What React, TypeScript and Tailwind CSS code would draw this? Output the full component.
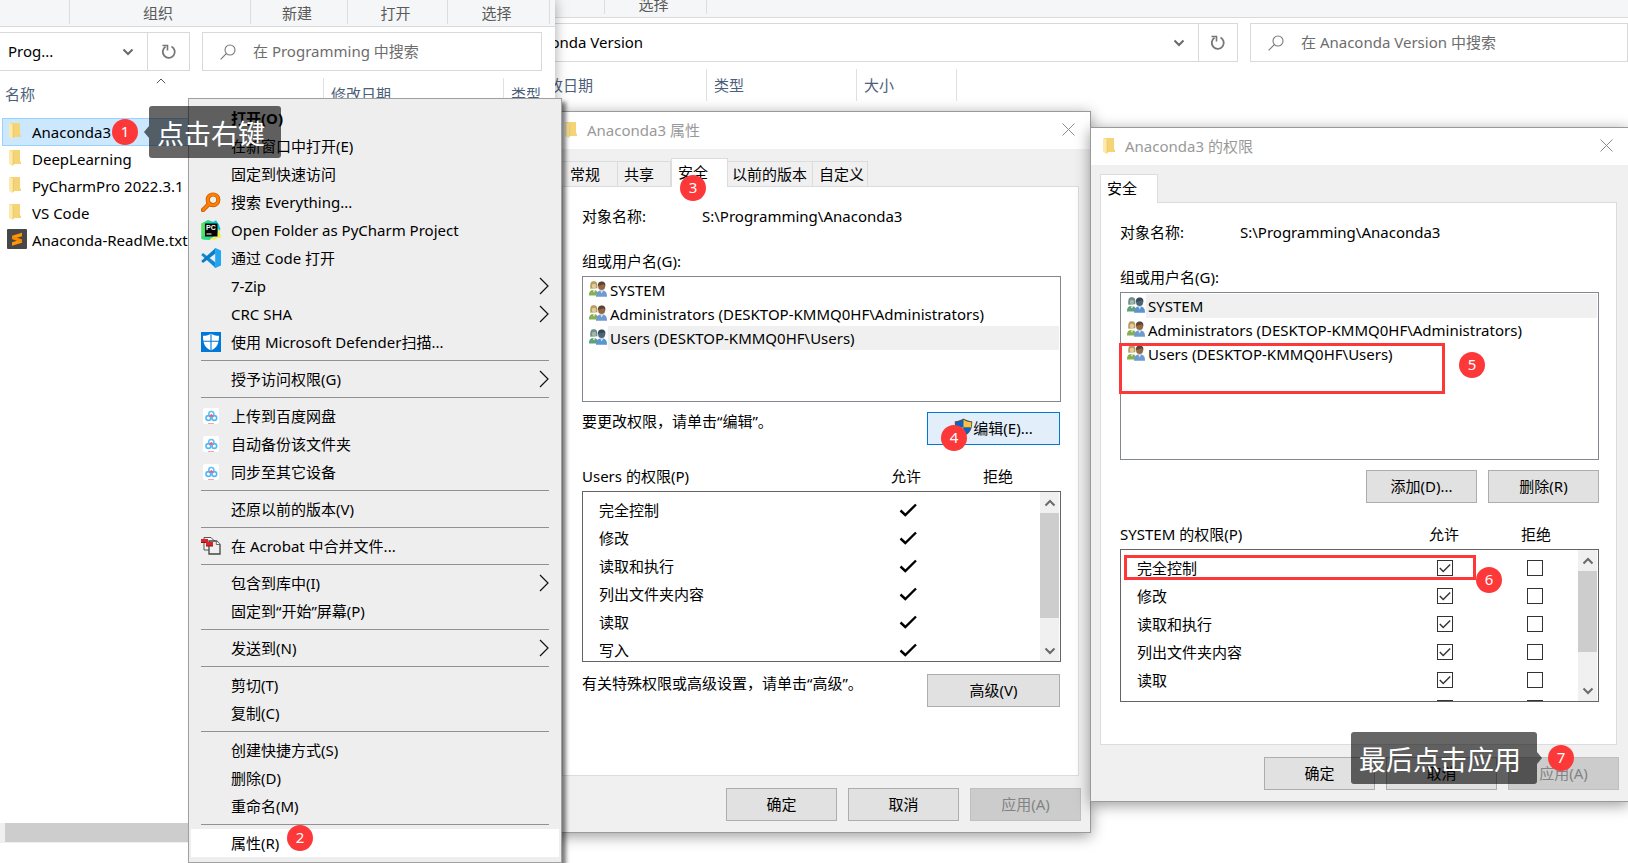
import { useState, type ReactNode } from "react";

const FONT = "font-['Noto_Sans','Noto_Sans_CJK_SC',sans-serif]";

/* ---------- icons ---------- */

function FolderIcon() {
  return (
    <svg width="14" height="18" viewBox="0 0 14 18" aria-hidden="true">
      <path d="M2 1h9.500v11L13 13v2H4z" fill="#f6d57b" />
      <path d="M5.500 1H12v11.500l1 .8V15H4.500z" fill="#f5d477" />
      <path d="M1 1l4.200 1.800V17.500L1 15z" fill="#fce9ac" />
      <path d="M5.200 3v13" stroke="#eac763" strokeWidth="1" />
    </svg>
  );
}

function SublimeIcon() {
  return (
    <svg width="20" height="20" viewBox="0 0 20 20" aria-hidden="true">
      <rect width="20" height="20" rx="1" fill="#474747" />
      <path d="M5 6.800l10-3v3.400L9.800 8.700l5.200 1.700v3.300l-10 3v-3.400l5-1.500-5-1.700z" fill="#ff9800" />
      <path d="M5 6.800v3.300l10 3.500v-3.200L8.500 8z" fill="#f57c00" opacity=".55" />
    </svg>
  );
}

function EverythingIcon() {
  return (
    <svg width="20" height="20" viewBox="0 0 20 20" aria-hidden="true">
      <path d="M2 18l6.500-6.500" stroke="#c45500" strokeWidth="4.400" strokeLinecap="round" />
      <circle cx="12" cy="7.800" r="5.300" fill="none" stroke="#c45500" strokeWidth="4.200" />
      <path d="M2 18l6.500-6.500" stroke="#ff8000" strokeWidth="2.600" strokeLinecap="round" />
      <circle cx="12" cy="7.800" r="5.300" fill="none" stroke="#ff8000" strokeWidth="2.800" />
    </svg>
  );
}

function PyCharmIcon() {
  return (
    <svg width="20" height="20" viewBox="0 0 20 20" aria-hidden="true">
      <path d="M.5 3.500L7 0l5 2 3-1.500L18 5l-2 9-8 6-7.500-1z" fill="#21d789" />
      <path d="M9 1l3 1 3-1.500L18 5l1.500 4-3 4L11 3z" fill="#0fc5dd" />
      <path d="M.5 3.500l3-1.500v17l-3-.8z" fill="#5be25a" />
      <path d="M16.500 8l2 3 1.500 7-3-.5-3 2H5l12-3z" fill="#eef23a" />
      <path d="M.5 16.500l4-1.500 7 1.500-3 3.500-7.500-.8z" fill="#2fdc86" />
      <rect x="4" y="3.500" width="12.500" height="13" fill="#050505" />
      <rect x="5.500" y="13.500" width="5" height="1" fill="#fff" />
      <text x="5" y="10.200" fontSize="7" fontWeight="700" fill="#fff" fontFamily="Liberation Sans, sans-serif">PC</text>
    </svg>
  );
}

function VsCodeIcon() {
  return (
    <svg width="20" height="20" viewBox="0 0 20 20" aria-hidden="true">
      <path d="M.2 7L2 5l12.500 9.500v5L13.500 19z" fill="#0f8ad6" />
      <path d="M.2 13L2 15l12.500-9.500v-5L13.500 1z" fill="#0b7cc6" />
      <path d="M14.500 0L20 2.500v15L14.500 20l-1.500-1 1.200-1V2L13 1z" fill="#24a5f2" />
    </svg>
  );
}

function DefenderIcon() {
  return (
    <svg width="20" height="20" viewBox="0 0 20 20" aria-hidden="true">
      <rect width="20" height="20" fill="#0078d7" />
      <path d="M10 1.500c2 1.500 4.500 2.300 8 2.300 0 7-1.500 12-8 14.700C3.500 15.800 2 10.800 2 3.800c3.500 0 6-.8 8-2.300z" fill="#fff" />
      <path d="M10 1v18M2 9.300h16" stroke="#0078d7" strokeWidth="1.100" />
    </svg>
  );
}

function BaiduIcon() {
  return (
    <svg width="20" height="20" viewBox="0 0 20 20" aria-hidden="true">
      <rect x="2" y="2" width="16" height="16" rx="2" fill="#fff" />
      <circle cx="10.300" cy="8" r="2.600" fill="none" stroke="#5cc0f7" strokeWidth="1.500" />
      <circle cx="7.400" cy="12" r="2.400" fill="none" stroke="#4fbaf8" strokeWidth="1.600" />
      <circle cx="13.300" cy="12" r="2.400" fill="none" stroke="#4fbaf8" strokeWidth="1.600" />
      <path d="M8.300 10.800l2-1.900 2 1.900" fill="none" stroke="#ee6478" strokeWidth="1.600" />
      <path d="M7 17.500h6" stroke="#f7a5b0" strokeWidth="1" />
    </svg>
  );
}

function AcrobatIcon() {
  return (
    <svg width="20" height="20" viewBox="0 0 20 20" aria-hidden="true">
      <path d="M3 1.500h7l3 3V14H3z" fill="#f4f4f4" stroke="#555" />
      <path d="M8 5h7.500L19 8.500V18H8z" fill="#efefef" stroke="#444" strokeWidth="1.300" />
      <path d="M15.300 5v3.500H19" fill="#fff" stroke="#666" />
      <path d="M0 3h7v3h5v4H5V7H0z" fill="#d9222a" />
      <path d="M0 6.500h5M5 10h7" stroke="#8f1418" />
    </svg>
  );
}

function UsersIcon({ dim = false }: { dim?: boolean }) {
  return (
    <svg width="18" height="16" viewBox="0 0 18 16" aria-hidden="true">
      <path d="M0 14.500c0-4 1.500-5.500 4.500-5.500S9 10.500 9 14.500z" fill={dim ? "#5da079" : "#84b052"} />
      <path d="M1.300 7.800C.8 2 2 .3 4.800.3S8.800 2 8.300 7.300z" fill={dim ? "#6f8f86" : "#b89d60"} />
      <circle cx="5" cy="5" r="2.200" fill={dim ? "#a4b5b0" : "#e6cb9f"} />
      <path d="M3.500 9.500L5 11.500 6.500 9z" fill="#e9f0e2" />
      <path d="M7 15.800c0-4.600 2-6.300 5.700-6.300s5.300 1.700 5.300 6.300z" fill={dim ? "#5b95cf" : "#6f9bd1"} />
      <path d="M11.400 9.800l1.300 2.600 1.400-2.600z" fill="#dce9f7" />
      <circle cx="12.600" cy="5.400" r="3.500" fill={dim ? "#4d6474" : "#966743"} />
      <path d="M8.900 5C8.900 1.500 10.300.6 12.800.6s4 1.400 3.500 4.900l-1.500-2.200z" fill={dim ? "#34495a" : "#5b4436"} />
    </svg>
  );
}

function ShieldIcon() {
  return (
    <svg width="19" height="19" viewBox="0 0 19 19" aria-hidden="true">
      <path d="M9.500.5c2.500 1.600 5 2.500 8.700 2.700C18.500 11 16 15.500 9.500 18.500 3 15.500.5 11 .8 3.200 4.500 3 7 2.100 9.500.5z" fill="#555" />
      <path d="M9.500 1.800V9.500H2C1.700 7.500 1.700 6 1.800 4.200 5 4 7.300 3.200 9.500 1.800z" fill="#0a64c8" />
      <path d="M9.500 1.800V9.500H17c.3-2 .3-3.500.2-5.300C14 4 11.700 3.200 9.500 1.800z" fill="#fdc23a" />
      <path d="M9.500 9.500H2.100c1 3.800 3.400 6.200 7.400 8z" fill="#fdc23a" />
      <path d="M9.500 9.500h7.400c-1 3.800-3.400 6.200-7.400 8z" fill="#0a64c8" />
    </svg>
  );
}

function Chevron({ up = false }: { up?: boolean }) {
  return (
    <svg width="12" height="8" viewBox="0 0 12 8" aria-hidden="true">
      <path d={up ? "M1.500 6.500L6 2l4.500 4.500" : "M1.500 1.500L6 6l4.500-4.500"} fill="none" stroke="#6a6a6a" strokeWidth="2" />
    </svg>
  );
}

function RefreshIcon() {
  return (
    <svg width="16" height="16" viewBox="0 0 16 16" aria-hidden="true">
      <path d="M10.500 2.500A6 6 0 1 1 4.500 2.800" fill="none" stroke="#767676" strokeWidth="1.800" />
      <path d="M1.500 1.500H6.500V6.500" fill="none" stroke="#767676" strokeWidth="1.600" />
    </svg>
  );
}

function SearchIcon() {
  return (
    <svg className="shrink-0" width="16" height="16" viewBox="0 0 16 16" aria-hidden="true">
      <circle cx="10" cy="6" r="5" fill="none" stroke="#7a7a7a" strokeWidth="1.100" />
      <path d="M6.300 9.700L.6 15.400" stroke="#7a7a7a" strokeWidth="1.200" />
    </svg>
  );
}

function CloseIcon() {
  return (
    <svg width="13" height="13" viewBox="0 0 13 13" aria-hidden="true">
      <path d="M.5.5l12 12M12.500.5l-12 12" stroke="#8c8c8c" strokeWidth="1" />
    </svg>
  );
}

/* ---------- explorer ---------- */

function RibbonGroup({ label, className }: { label?: string; className: string }) {
  return (
    <div className={`flex shrink-0 items-center justify-center border-r border-[#dcdddf] pr-1 text-[#5a5a5a] ${className}`}>
      {label}
    </div>
  );
}

function AddressButtons({ refreshWidth }: { refreshWidth: string }) {
  return (
    <>
      <button aria-label="以前的位置" className="flex w-[38px] items-center justify-center">
        <Chevron />
      </button>
      <button aria-label="刷新" className={`flex shrink-0 items-center justify-center border-l border-[#d9d9d9] ${refreshWidth}`}>
        <RefreshIcon />
      </button>
    </>
  );
}

function SearchBox({ placeholder, className }: { placeholder: string; className: string }) {
  return (
    <label className={`flex h-[39px] items-center gap-[17px] border border-[#d9d9d9] bg-white pl-[17px] ${className}`}>
      <SearchIcon />
      <input
        type="search"
        aria-label={placeholder}
        placeholder={placeholder}
        className="w-full min-w-0 bg-transparent pb-[2px] outline-none placeholder:text-[#6d6d6d]"
      />
    </label>
  );
}

function BackExplorer() {
  return (
    <section className="absolute inset-0 bg-white" aria-label="Anaconda Version">
      <div className="flex h-[18px] items-start border-b border-[#d9dadb] bg-[#f5f6f7]">
        <RibbonGroup className="h-[14px] w-[605px]" />
        <RibbonGroup label="选择" className="-mt-2 h-[22px] w-[102px] pt-[2px]" />
      </div>
      <div className="mt-[5px] flex pl-[508px]">
        <div className="flex h-[39px] w-[730px] border border-[#d9d9d9]">
          <input aria-label="地址" readOnly value="Anaconda Version" className="min-w-0 flex-1 pb-[2px] pl-[7px] outline-none" />
          <AddressButtons refreshWidth="w-[39px]" />
        </div>
        <SearchBox placeholder="在 Anaconda Version 中搜索" className="ml-3 flex-1" />
      </div>
      <div className="mt-[7px] flex h-8 items-center pl-[526px] text-[#4c607a]">
        <div className="flex h-full w-[181px] items-center border-r border-[#e0e0e0] pl-[7px]">修改日期</div>
        <div className="flex h-full w-[150px] items-center border-r border-[#e0e0e0] pl-[7px]">类型</div>
        <div className="flex h-full w-[100px] items-center border-r border-[#e0e0e0] pl-[7px]">大小</div>
      </div>
    </section>
  );
}

const FILES = ["Anaconda3", "DeepLearning", "PyCharmPro 2022.3.1", "VS Code", "Anaconda-ReadMe.txt"];

function FrontExplorer() {
  return (
    <section
      aria-label="Programming"
      className="absolute inset-y-0 left-0 flex w-[555px] flex-col bg-white shadow-[0_0_12px_rgba(0,0,0,0.35)]"
    >
      <div className="flex h-[27px] items-start border-b border-[#d9dadb] bg-[#f5f6f7]">
        <RibbonGroup className="h-6 w-[70px]" />
        <RibbonGroup label="组织" className="h-6 w-[181px] pt-[2px]" />
        <RibbonGroup label="新建" className="h-6 w-[97px] pt-[2px]" />
        <RibbonGroup label="打开" className="h-6 w-[100px] pt-[2px]" />
        <RibbonGroup label="选择" className="h-6 w-[102px] pt-[2px]" />
      </div>
      <div className="mt-[5px] flex pr-[13px]">
        <div className="flex h-[39px] w-[190px] border border-l-0 border-[#d9d9d9]">
          <input aria-label="地址" readOnly value="Prog..." className="min-w-0 flex-1 pb-[2px] pl-2 outline-none" />
          <AddressButtons refreshWidth="w-[42px]" />
        </div>
        <SearchBox placeholder="在 Programming 中搜索" className="ml-3 flex-1" />
      </div>
      <div className="relative mt-[7px] flex h-8 text-[#4c607a]">
        <div className="flex w-[324px] items-center border-r border-[#e0e0e0] pl-[5px]">名称</div>
        <div className="flex w-[180px] items-center border-r border-[#e0e0e0] pl-[7px]">修改日期</div>
        <div className="flex items-center pl-[7px]">类型</div>
        <svg className="absolute top-0 left-[156px]" width="10" height="6" viewBox="0 0 10 6" aria-hidden="true">
          <path d="M.8 5.200L5 1l4.200 4.200" fill="none" stroke="#555" />
        </svg>
      </div>
      <ul className="mt-2 pl-[2px]">
        {FILES.map((name, i) => (
          <li
            key={name}
            className={
              i === 0
                ? "-mb-px flex h-[28px] items-center border border-[#99d1ff] bg-[#cce8ff] whitespace-nowrap"
                : "flex h-[27px] items-center border-x border-transparent whitespace-nowrap"
            }
          >
            <span className={`flex w-[29px] items-center pb-[2px] ${i === 4 ? "pl-1" : "pl-[5px]"}`}>
              {i === 4 ? <SublimeIcon /> : <FolderIcon />}
            </span>
            {name}
          </li>
        ))}
      </ul>
      <div className="mt-auto mb-5 h-5 bg-[#f0f0f0] pl-[5px]">
        <div className="h-[19px] bg-[#cdcdcd]" />
      </div>
    </section>
  );
}

/* ---------- context menu ---------- */

type Item = { label: string; icon?: ReactNode; arrow?: boolean; bold?: boolean; active?: boolean };

const MENU: Item[][] = [
  [
    { label: "打开(O)", bold: true },
    { label: "在新窗口中打开(E)" },
    { label: "固定到快速访问" },
    { label: "搜索 Everything...", icon: <EverythingIcon /> },
    { label: "Open Folder as PyCharm Project", icon: <PyCharmIcon /> },
    { label: "通过 Code 打开", icon: <VsCodeIcon /> },
    { label: "7-Zip", arrow: true },
    { label: "CRC SHA", arrow: true },
    { label: "使用 Microsoft Defender扫描...", icon: <DefenderIcon /> },
  ],
  [{ label: "授予访问权限(G)", arrow: true }],
  [
    { label: "上传到百度网盘", icon: <BaiduIcon /> },
    { label: "自动备份该文件夹", icon: <BaiduIcon /> },
    { label: "同步至其它设备", icon: <BaiduIcon /> },
  ],
  [{ label: "还原以前的版本(V)" }],
  [{ label: "在 Acrobat 中合并文件...", icon: <AcrobatIcon /> }],
  [{ label: "包含到库中(I)", arrow: true }, { label: "固定到“开始”屏幕(P)" }],
  [{ label: "发送到(N)", arrow: true }],
  [{ label: "剪切(T)" }, { label: "复制(C)" }],
  [{ label: "创建快捷方式(S)" }, { label: "删除(D)" }, { label: "重命名(M)" }],
  [{ label: "属性(R)", active: true }],
];

function ContextMenu() {
  return (
    <div
      role="menu"
      className="absolute top-[98px] left-[188px] w-[374px] border border-[#a0a0a0] bg-[#eeeeee] px-[2px] py-[5px] shadow-[4px_4px_4px_rgba(0,0,0,0.5)]"
    >
      {MENU.map((group, g) => (
        <div key={g} role="group">
          {g > 0 && <div role="separator" className="mx-[10px] my-1 h-px bg-[#919191]" />}
          {group.map((item) => (
            <button
              key={item.label}
              role="menuitem"
              className={`flex h-7 w-full items-center pr-[10px] pl-[10px] text-left ${item.active ? "bg-white" : ""} ${item.bold ? "font-bold" : ""}`}
            >
              <span className="w-[30px] shrink-0">{item.icon}</span>
              <span className="flex-1">{item.label}</span>
              {item.arrow && (
                <svg width="10" height="18" viewBox="0 0 10 18" aria-hidden="true">
                  <path d="M1 1l8 8-8 8" fill="none" stroke="#111" strokeWidth="1.200" />
                </svg>
              )}
            </button>
          ))}
        </div>
      ))}
    </div>
  );
}

/* ---------- dialogs ---------- */

function PushButton({ children, className = "w-[111px]", disabled = false, focused = false }: {
  children: ReactNode;
  className?: string;
  disabled?: boolean;
  focused?: boolean;
}) {
  const tone = disabled
    ? "border-[#bfbfbf] bg-[#cccccc] text-[#838383]"
    : focused
      ? "border-[#0078d7] bg-[#e2effa]"
      : "border-[#adadad] bg-[#e1e1e1]";
  return (
    <button disabled={disabled} className={`flex h-[33px] shrink-0 items-center justify-center border pb-[2px] ${tone} ${className}`}>
      {children}
    </button>
  );
}

function Dialog({ title, tabs, selected, className, children }: {
  title: string;
  tabs: { label: string; box: string }[];
  selected: number;
  className: string;
  children: ReactNode;
}) {
  return (
    <section
      role="dialog"
      aria-label={title}
      className={`absolute w-[539px] border border-[#9a9a9a] bg-[#f0f0f0] shadow-[0_3px_14px_rgba(0,0,0,0.4)] ${className}`}
    >
      <header className="flex h-[37px] items-center bg-white pr-[15px] pb-[2px] pl-[11px] text-[#999]">
        <FolderIcon />
        <h2 className="ml-[9px] flex-1">{title}</h2>
        <button aria-label="关闭">
          <CloseIcon />
        </button>
      </header>
      <div role="tablist" className="flex h-[37px] items-end pl-[9px]">
        {tabs.map((tab, i) => (
          <button
            key={tab.label}
            role="tab"
            aria-selected={i === selected}
            className={`text-left whitespace-nowrap ${tab.box} ${
              i === selected
                ? "relative -mb-px h-[29px] border border-b-0 border-[#dcdcdc] bg-white pb-[2px]"
                : "h-[25px] border-t border-r border-[#dcdcdc] bg-[#f0f0f0]"
            }`}
          >
            {tab.label}
          </button>
        ))}
      </div>
      <div className="mr-[11px] ml-[9px] border border-[#dcdcdc] bg-white pr-[17px] pl-[19px]">{children}</div>
      <footer className="flex justify-end gap-[11px] pt-3 pr-[9px] pb-[11px]">
        <PushButton>确定</PushButton>
        <PushButton>取消</PushButton>
        <PushButton disabled>应用(A)</PushButton>
      </footer>
    </section>
  );
}

const PRINCIPALS = [
  "SYSTEM",
  "Administrators (DESKTOP-KMMQ0HF\\Administrators)",
  "Users (DESKTOP-KMMQ0HF\\Users)",
];

function ObjectAndUsers({ active, listHeight }: { active: number; listHeight: string }) {
  return (
    <>
      <div className="flex pt-[17px] leading-6">
        <span className="w-[120px]">对象名称:</span>
        <span>S:\Programming\Anaconda3</span>
      </div>
      <h3 className="mt-[21px] leading-6">组或用户名(G):</h3>
      <ul className={`mt-[3px] border border-[#828790] py-px pr-px ${listHeight}`}>
        {PRINCIPALS.map((name, i) => (
          <li key={name} className="flex h-6 items-center whitespace-nowrap">
            <span className="w-[25px] shrink-0 pb-[2px] pl-[6px]">
              <UsersIcon dim={i === active} />
            </span>
            <span className={`flex-1 pl-[2px] leading-6 ${i === active ? "bg-[#f0f0f0]" : ""}`}>{name}</span>
          </li>
        ))}
      </ul>
    </>
  );
}

const RIGHTS = ["完全控制", "修改", "读取和执行", "列出文件夹内容", "读取", "写入"];

function RightsHeader({ who }: { who: string }) {
  return (
    <div className="mt-[19px] flex pr-4 leading-6">
      <span className="flex-1">{who} 的权限(P)</span>
      <span className="w-[90px] text-center">允许</span>
      <span className="w-[94px] text-center">拒绝</span>
    </div>
  );
}

function RightsBox({ className, thumb, children }: { className: string; thumb: string; children: ReactNode }) {
  return (
    <div className={`mt-[3px] flex overflow-hidden border border-[#646464] ${className}`}>
      <table className="mt-1 w-full flex-1 table-fixed self-start">
        <tbody>{children}</tbody>
      </table>
      <div className="mr-px flex w-[19px] shrink-0 flex-col items-center bg-[#f0f0f0]">
        <button aria-label="向上滚动" className="flex h-[21px] w-full shrink-0 items-center justify-center">
          <Chevron up />
        </button>
        <div className={`w-full bg-[#cdcdcd] ${thumb}`} />
        <button aria-label="向下滚动" className="mt-auto flex h-[21px] w-full shrink-0 items-center justify-center">
          <Chevron />
        </button>
      </div>
    </div>
  );
}

function CheckBox({ label, initial }: { label: string; initial: boolean }) {
  const [on, setOn] = useState(initial);
  return (
    <label className="relative block h-4 w-4">
      <input
        type="checkbox"
        aria-label={label}
        checked={on}
        onChange={() => setOn(!on)}
        className="block h-4 w-4 appearance-none border border-[#333] bg-white"
      />
      {on && (
        <svg className="pointer-events-none absolute inset-0" width="16" height="16" viewBox="0 0 16 16" aria-hidden="true">
          <path d="M2.800 8l3.400 3.500L13.200 4.500" fill="none" stroke="#333" strokeWidth="1.400" />
        </svg>
      )}
    </label>
  );
}

function PropertiesDialog() {
  return (
    <Dialog
      title="Anaconda3 属性"
      className="top-[111px] left-[552px]"
      selected={2}
      tabs={[
        { label: "常规", box: "w-[56px] pl-2" },
        { label: "共享", box: "w-[53px] pl-[6px]" },
        { label: "安全", box: "w-[57px] pl-[6px]" },
        { label: "以前的版本", box: "w-[85px] pl-1" },
        { label: "自定义", box: "w-[55px] pl-[6px]" },
      ]}
    >
      <ObjectAndUsers active={2} listHeight="h-[126px]" />
      <div className="mt-[10px] mr-px flex items-start justify-between">
        <p className="leading-[18px]">要更改权限，请单击“编辑”。</p>
        <PushButton focused className="w-[133px]">
          <ShieldIcon />
          编辑(E)...
        </PushButton>
      </div>
      <RightsHeader who="Users" />
      <RightsBox className="h-[171px]" thumb="h-[105px]">
        {RIGHTS.map((right) => (
          <tr key={right} className="h-7">
            <th scope="row" className="pl-4 text-left font-normal">{right}</th>
            <td className="w-[90px] pl-9">
              <svg role="img" aria-label="允许" width="18" height="14" viewBox="0 0 18 14">
                <path d="M1.500 7.500l4.800 4.500L17 1.500" fill="none" stroke="#000" strokeWidth="2.400" />
              </svg>
            </td>
            <td className="w-[87px]" />
          </tr>
        ))}
      </RightsBox>
      <div className="mt-3 mr-px flex items-start justify-between pb-[68px]">
        <p className="leading-[18px]">有关特殊权限或高级设置，请单击“高级”。</p>
        <PushButton className="w-[133px]">高级(V)</PushButton>
      </div>
    </Dialog>
  );
}

function PermissionsDialog() {
  return (
    <Dialog
      title="Anaconda3 的权限"
      className="top-[127px] left-[1090px]"
      selected={0}
      tabs={[{ label: "安全", box: "w-[58px] pl-[6px]" }]}
    >
      <ObjectAndUsers active={0} listHeight="h-[168px]" />
      <div className="mt-[10px] flex justify-end gap-[11px]">
        <PushButton>添加(D)...</PushButton>
        <PushButton>删除(R)</PushButton>
      </div>
      <RightsHeader who="SYSTEM" />
      <div className="pb-[42px]">
        <RightsBox className="h-[153px]" thumb="h-[81px]">
          {RIGHTS.map((right) => (
            <tr key={right} className="h-7">
              <th scope="row" className="pl-4 text-left font-normal">{right}</th>
              <td className="w-[90px] pl-9">
                <CheckBox label={`${right} 允许`} initial />
              </td>
              <td className="w-[87px] pl-9">
                <CheckBox label={`${right} 拒绝`} initial={false} />
              </td>
            </tr>
          ))}
        </RightsBox>
      </div>
    </Dialog>
  );
}

/* ---------- annotations ---------- */

function Badge({ n, className }: { n: number; className: string }) {
  return (
    <span className={`absolute flex h-[26px] w-[26px] items-center justify-center rounded-full bg-[#fc3838] pb-[2px] text-[15px] leading-none text-white ${className}`}>
      {n}
    </span>
  );
}

function Tip({ text, side, className }: { text: string; side: "left" | "right"; className: string }) {
  return (
    <div className={`absolute flex items-center ${side === "left" ? "" : "flex-row-reverse"} ${className}`}>
      <span
        className={`h-0 w-0 border-y-[6px] border-transparent ${
          side === "left" ? "border-r-[5px] border-r-black/60" : "border-l-[5px] border-l-black/60"
        }`}
      />
      <span className="rounded-[3px] bg-black/60 pt-1 pr-4 pl-2 text-[27px] leading-[48px] whitespace-nowrap text-white">{text}</span>
    </div>
  );
}

export default function App() {
  return (
    <main className={`relative h-screen w-full overflow-hidden bg-white text-[15px] leading-[22px] text-black ${FONT}`}>
      <BackExplorer />
      <FrontExplorer />
      <PropertiesDialog />
      <PermissionsDialog />
      <ContextMenu />

      <div className="absolute top-[343px] left-[1119px] h-[51px] w-[326px] border-[3px] border-[#fc3838]" />
      <div className="absolute top-[555px] left-[1124px] h-[25px] w-[352px] border-[3px] border-[#fc3838]" />
      <Tip text="点击右键" side="left" className="top-[106px] left-[144px]" />
      <Tip text="最后点击应用" side="right" className="top-[732px] left-[1351px]" />
      <Badge n={1} className="top-[119px] left-[112px]" />
      <Badge n={2} className="top-[825px] left-[287px]" />
      <Badge n={3} className="top-[175px] left-[680px]" />
      <Badge n={4} className="top-[425px] left-[941px]" />
      <Badge n={5} className="top-[352px] left-[1459px]" />
      <Badge n={6} className="top-[567px] left-[1476px]" />
      <Badge n={7} className="top-[745px] left-[1548px]" />
    </main>
  );
}
